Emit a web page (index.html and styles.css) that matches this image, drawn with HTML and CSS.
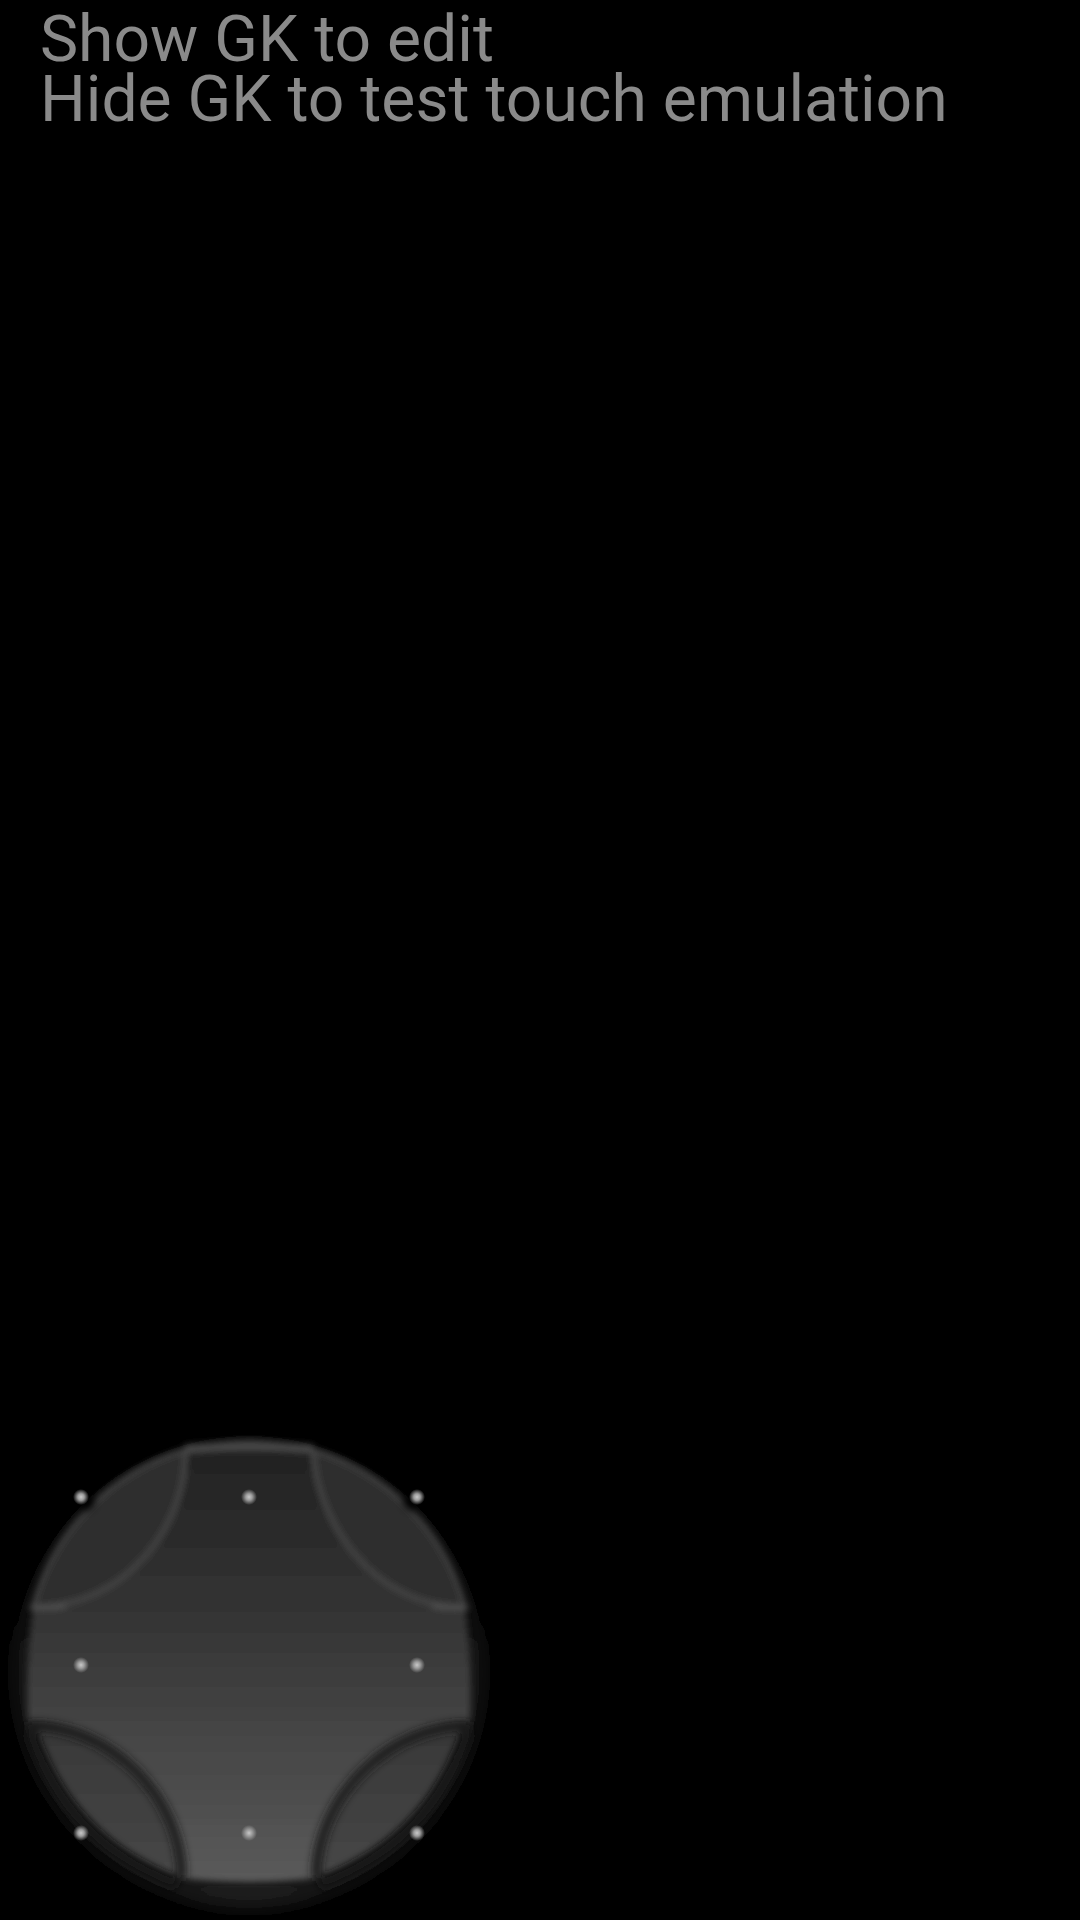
FILE: index.html
```html
<!DOCTYPE html>
<html lang="en">
<head>
<meta charset="utf-8">
<title>Gamepad overlay</title>
<link rel="stylesheet" href="styles.css">
</head>
<body>
<main class="screen">
  <div class="hint">
    <p class="hint-line">Show GK to edit</p>
    <p class="hint-line">Hide GK to test touch emulation</p>
  </div>
  <svg class="pad" width="500" height="510" viewBox="0 0 500 510" aria-hidden="true">
    <defs>
      <linearGradient id="halo" x1="0" y1="0" x2="0" y2="1">
        <stop offset="0" stop-color="#0a0a0a"/>
        <stop offset="0.5" stop-color="#131313"/>
        <stop offset="1" stop-color="#1a1a1a"/>
      </linearGradient>
      <linearGradient id="body" gradientUnits="userSpaceOnUse" x1="0" y1="38" x2="0" y2="470">
        <stop offset="0" stop-color="#222222"/>
        <stop offset="0.37" stop-color="#333333"/>
        <stop offset="0.62" stop-color="#434343"/>
        <stop offset="0.85" stop-color="#505050"/>
        <stop offset="1" stop-color="#5b5b5b"/>
      </linearGradient>
      <linearGradient id="petal" gradientUnits="userSpaceOnUse" x1="0" y1="320" x2="0" y2="465">
        <stop offset="0" stop-color="#383838"/>
        <stop offset="1" stop-color="#474747"/>
      </linearGradient>
      <radialGradient id="dot">
        <stop offset="0" stop-color="#c8c8c8"/>
        <stop offset="0.4" stop-color="#9c9c9c"/>
        <stop offset="1" stop-color="#9c9c9c" stop-opacity="0"/>
      </radialGradient>
      <filter id="soft" x="-5%" y="-5%" width="110%" height="110%"><feGaussianBlur stdDeviation="3"/></filter>
      <filter id="b8" x="-10%" y="-10%" width="120%" height="120%"><feGaussianBlur stdDeviation="8"/></filter>
      <filter id="b5" x="-20%" y="-20%" width="140%" height="140%"><feGaussianBlur stdDeviation="4.5"/></filter>
    </defs>

    <circle cx="249" cy="262" r="236" fill="url(#halo)" filter="url(#b8)"/>

    <g filter="url(#soft)">
      <path d="M185 40 Q249 20 313 40Z" fill="#353535"/>

      <path class="lens-top" d="M185 40 C188 110 130 197 33 197 A223 223 0 0 1 185 40Z"/>
      <path class="lens-top" d="M313 40 C316 110 372 197 465 197 A223 223 0 0 0 313 40Z"/>

      <path d="M185 38 Q249 33 313 38 C316 110 372 197 465 197 Q473 255 470 312 C395 312 318 380 316 468 Q249 476 182 468 C180 380 105 312 28 312 Q25 255 33 197 C130 197 188 110 185 38Z" fill="url(#body)"/>

      <path d="M34 316 C56 380 96 436 180 468 C180 385 110 314 34 316Z" fill="url(#petal)"/>
      <path d="M464 316 C442 380 402 436 318 468 C318 385 388 314 464 316Z" fill="url(#petal)"/>

      <path class="edge-light" d="M33 197 C130 197 188 110 185 40"/>
      <path class="edge-light" d="M465 197 C372 197 316 110 313 40"/>
      <path class="edge-light strong" d="M30 197 C36 198 50 198 66 196"/>
      <path class="edge-light strong" d="M468 197 C462 198 448 198 432 196"/>
      <path class="edge-light strong wide" d="M185 39 Q249 33 313 39"/>
      <path class="edge-light faint" d="M33 197 A223 223 0 0 1 185 40"/>
      <path class="edge-light faint" d="M465 197 A223 223 0 0 0 313 40"/>
    </g>

    <g filter="url(#b5)">
      <path class="edge-dark" d="M28 316 C108 314 182 385 182 468"/>
      <path class="edge-dark" d="M470 316 C392 314 316 385 316 468"/>
      <path class="edge-dark thin" d="M30 322 C52 386 92 442 177 474"/>
      <path class="edge-dark thin" d="M468 322 C446 386 406 442 320 474"/>
      <circle class="notch" cx="86" cy="92" r="8"/>
      <circle class="notch" cx="412" cy="92" r="8"/>
    </g>

    <circle cx="81" cy="87" r="8" fill="url(#dot)"/>
    <circle cx="249" cy="87" r="8" fill="url(#dot)"/>
    <circle cx="417" cy="87" r="8" fill="url(#dot)"/>
    <circle cx="81" cy="255" r="8" fill="url(#dot)"/>
    <circle cx="417" cy="255" r="8" fill="url(#dot)"/>
    <circle cx="81" cy="423" r="8" fill="url(#dot)"/>
    <circle cx="249" cy="423" r="8" fill="url(#dot)"/>
    <circle cx="417" cy="423" r="8" fill="url(#dot)"/>
  </svg>
</main>
</body>
</html>
```
FILE: styles.css
```css
html, body {
  margin: 0;
  padding: 0;
  background: #000;
}

.screen {
  display: flex;
  flex-direction: column;
  justify-content: space-between;
  width: 1080px;
  height: 1920px;
  overflow: hidden;
  background: #000;
}

.hint {
  padding: 9px 0 0 40px;
}

.hint-line {
  margin: 0;
  font-family: Roboto, "Noto Sans", sans-serif;
  font-size: 64.2px;
  line-height: 60px;
  color: #8a8a8a;
  white-space: nowrap;
}

.pad {
  display: block;
  flex: none;
}

.lens-top {
  fill: #2d2d2d;
}

.edge-dark {
  fill: none;
  stroke: #1c1c1c;
  stroke-width: 9;
}

.edge-dark.thin {
  stroke: #161616;
  stroke-width: 12;
}

.edge-light {
  fill: none;
  stroke: #4a4a4a;
  stroke-width: 4;
}

.edge-light.strong {
  stroke: #505050;
  stroke-width: 5;
}

.edge-light.strong.wide {
  stroke: #484848;
  stroke-width: 8;
}

.edge-light.faint {
  stroke: #484848;
  stroke-width: 3.5;
}

.notch {
  fill: #000;
}
```
